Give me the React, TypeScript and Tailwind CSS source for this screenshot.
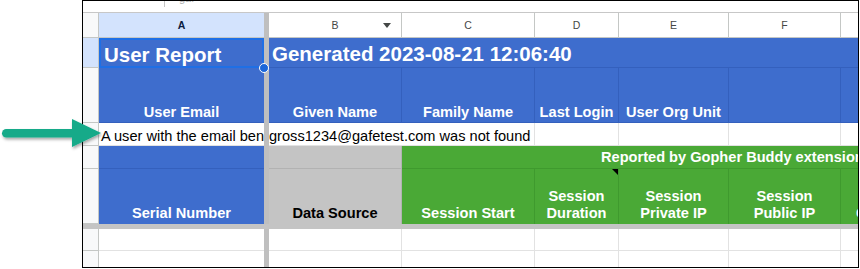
const RowNum = ({ active = false }: { active?: boolean }) => (
  <div
    className={
      active
        ? 'w-[16px] shrink-0 bg-[#d3e3fd] border-r border-b border-[#c4c7c5]'
        : 'w-[16px] shrink-0 bg-[#f8f9fa] border-r border-b border-[#c4c7c5]'
    }
  />
);

const Divider = () => <div className="w-[5px] shrink-0 bg-[#bfbfbf]" />;

const Arrow = () => (
  <svg
    className="absolute left-0 top-[112px] z-30"
    width="110"
    height="45"
    viewBox="0 0 110 45"
  >
    <defs>
      <filter id="sh" x="-10%" y="-20%" width="130%" height="160%">
        <feDropShadow dx="1" dy="2" stdDeviation="1.5" floodColor="#000" floodOpacity="0.35" />
      </filter>
    </defs>
    <g filter="url(#sh)" fill="#12aa89">
      <rect x="2" y="17" width="74" height="8.5" rx="4.25" />
      <polygon points="72,7 101,21 72,35" />
    </g>
  </svg>
);

export default function App() {
  return (
    <div className="relative w-[860px] h-[269px] bg-white overflow-hidden font-['Liberation_Sans',Arial,Helvetica,sans-serif] text-[14.6px] leading-[17px]">
      <Arrow />
      <div className="ml-[82px] w-[777px] h-[268px] border border-black flex flex-col overflow-hidden">
        {/* formula bar remnant */}
        <div className="h-[12px] shrink-0 border-b border-[#c7c7c7] flex items-start">
          <div className="w-[81px]" />
          <div className="w-px h-[6px] bg-[#c4c4c4]" />
          <div className="ml-[14px] -mt-[9px] text-[11px] leading-[12px] text-[#b0b0b0]">gaf</div>
        </div>

        {/* column letters */}
        <div className="h-[25px] shrink-0 flex text-[10.5px] text-[#444746]">
          <div className="w-[16px] shrink-0 bg-[#f8f9fa] border-r border-b border-[#c4c7c5]" />
          <div className="w-[165px] shrink-0 bg-[#d3e3fd] border-b border-[#c4c7c5] flex items-center justify-center font-bold text-[#0b1d3f]">
            A
          </div>
          <Divider />
          <div className="relative w-[133px] shrink-0 border-r border-b border-[#c4c7c5] flex items-center justify-center">
            B
            <span className="absolute right-[10px] top-[10px] border-l-[4px] border-r-[4px] border-t-[5px] border-l-transparent border-r-transparent border-t-[#444746]" />
          </div>
          <div className="w-[133px] shrink-0 border-r border-b border-[#c4c7c5] flex items-center justify-center">C</div>
          <div className="w-[84px] shrink-0 border-r border-b border-[#c4c7c5] flex items-center justify-center">D</div>
          <div className="w-[110px] shrink-0 border-r border-b border-[#c4c7c5] flex items-center justify-center">E</div>
          <div className="w-[112px] shrink-0 border-r border-b border-[#c4c7c5] flex items-center justify-center">F</div>
          <div className="flex-1 border-b border-[#c4c7c5]" />
        </div>

        {/* row 1 */}
        <div className="h-[30px] shrink-0 flex text-white font-bold text-[20.5px] leading-[24px]">
          <RowNum active />
          <div className="relative w-[165px] shrink-0 bg-[#3e6dcd] border-2 border-[#1f6fe5] flex items-center pl-[3px] pt-[3px] whitespace-nowrap">
            User Report
            <span className="absolute -right-[7px] -bottom-[7px] z-20 w-[10px] h-[10px] rounded-full bg-[#1a66d9] border border-white" />
          </div>
          <Divider />
          <div className="flex-1 bg-[#3e6dcd] border-b border-[#3460bd] flex items-center pl-[3px] pt-[3px] whitespace-nowrap">
            Generated 2023-08-21 12:06:40
          </div>
        </div>

        {/* row 2 */}
        <div className="h-[55px] shrink-0 flex text-white font-bold text-center">
          <RowNum />
          <div className="w-[165px] shrink-0 bg-[#3e6dcd] border-b border-[#3460bd] flex items-end justify-center pb-[1px]">User Email</div>
          <Divider />
          <div className="w-[133px] shrink-0 bg-[#3e6dcd] border-r border-b border-[#3460bd] flex items-end justify-center pb-[1px]">Given Name</div>
          <div className="w-[133px] shrink-0 bg-[#3e6dcd] border-r border-b border-[#3460bd] flex items-end justify-center pb-[1px]">Family Name</div>
          <div className="w-[84px] shrink-0 bg-[#3e6dcd] border-r border-b border-[#3460bd] flex items-end justify-center pb-[1px] whitespace-nowrap">Last Login</div>
          <div className="w-[110px] shrink-0 bg-[#3e6dcd] border-r border-b border-[#3460bd] flex items-end justify-center pb-[1px] whitespace-nowrap">User Org Unit</div>
          <div className="w-[112px] shrink-0 bg-[#3e6dcd] border-r border-b border-[#3460bd]" />
          <div className="flex-1 bg-[#3e6dcd] border-b border-[#3460bd]" />
        </div>

        {/* row 3 */}
        <div className="h-[23px] shrink-0 flex text-black">
          <RowNum />
          <div className="w-[165px] shrink-0 border-b border-[#e2e2e2] flex items-end pl-[2px] overflow-hidden whitespace-nowrap">
            A user with the email ben
          </div>
          <Divider />
          <div className="w-[266px] shrink-0 border-r border-b border-[#e2e2e2] flex items-end whitespace-nowrap overflow-hidden">
            gross1234@gafetest.com was not found
          </div>
          <div className="w-[84px] shrink-0 border-r border-b border-[#e2e2e2]" />
          <div className="w-[110px] shrink-0 border-r border-b border-[#e2e2e2]" />
          <div className="w-[112px] shrink-0 border-r border-b border-[#e2e2e2]" />
          <div className="flex-1 border-b border-[#e2e2e2]" />
        </div>

        {/* row 4 */}
        <div className="h-[23px] shrink-0 flex text-white font-bold">
          <RowNum />
          <div className="w-[165px] shrink-0 bg-[#3e6dcd] border-b border-[#3460bd]" />
          <Divider />
          <div className="w-[133px] shrink-0 bg-[#c4c4c4] border-r border-b border-[#b2b2b2]" />
          <div className="flex-1 bg-[#4aa936] border-b border-[#3f9a2e] flex items-end pl-[199px] pb-[2px] whitespace-nowrap overflow-hidden">
            Reported by Gopher Buddy extension
          </div>
        </div>

        {/* row 5 */}
        <div className="h-[55px] shrink-0 flex text-white font-bold text-center">
          <RowNum />
          <div className="w-[165px] shrink-0 bg-[#3e6dcd] flex items-end justify-center pb-[2px]">Serial Number</div>
          <Divider />
          <div className="w-[133px] shrink-0 bg-[#c4c4c4] border-r border-[#b2b2b2] flex items-end justify-center pb-[2px] text-black">Data Source</div>
          <div className="w-[133px] shrink-0 bg-[#4aa936] border-r border-[#3f9a2e] flex items-end justify-center pb-[2px]">Session Start</div>
          <div className="relative w-[84px] shrink-0 bg-[#4aa936] border-r border-[#3f9a2e] flex items-end justify-center pb-[2px]">
            <span>
              Session
              <br />
              Duration
            </span>
            <span className="absolute top-0 right-0 border-l-[6px] border-t-[6px] border-l-transparent border-t-black" />
          </div>
          <div className="w-[110px] shrink-0 bg-[#4aa936] border-r border-[#3f9a2e] flex items-end justify-center pb-[2px]">
            <span>
              Session
              <br />
              Private IP
            </span>
          </div>
          <div className="w-[112px] shrink-0 bg-[#4aa936] border-r border-[#3f9a2e] flex items-end justify-center pb-[2px]">
            <span>
              Session
              <br />
              Public IP
            </span>
          </div>
          <div className="flex-1 bg-[#4aa936] flex items-end pl-[15px] pb-[2px] whitespace-nowrap overflow-hidden">Client</div>
        </div>

        {/* frozen rows divider */}
        <div className="h-[5px] shrink-0 bg-[#c4c4c4]" />

        {/* row 6 */}
        <div className="h-[22px] shrink-0 flex">
          <RowNum />
          <div className="w-[165px] shrink-0 border-b border-[#e2e2e2]" />
          <Divider />
          <div className="w-[133px] shrink-0 border-r border-b border-[#e2e2e2]" />
          <div className="w-[133px] shrink-0 border-r border-b border-[#e2e2e2]" />
          <div className="w-[84px] shrink-0 border-r border-b border-[#e2e2e2]" />
          <div className="w-[110px] shrink-0 border-r border-b border-[#e2e2e2]" />
          <div className="w-[112px] shrink-0 border-r border-b border-[#e2e2e2]" />
          <div className="flex-1 border-b border-[#e2e2e2]" />
        </div>

        {/* row 7 */}
        <div className="flex-1 flex">
          <div className="w-[16px] shrink-0 bg-[#f8f9fa] border-r border-[#c4c7c5]" />
          <div className="w-[165px] shrink-0" />
          <Divider />
          <div className="w-[133px] shrink-0 border-r border-[#e2e2e2]" />
          <div className="w-[133px] shrink-0 border-r border-[#e2e2e2]" />
          <div className="w-[84px] shrink-0 border-r border-[#e2e2e2]" />
          <div className="w-[110px] shrink-0 border-r border-[#e2e2e2]" />
          <div className="w-[112px] shrink-0 border-r border-[#e2e2e2]" />
          <div className="flex-1" />
        </div>
      </div>
    </div>
  );
}
